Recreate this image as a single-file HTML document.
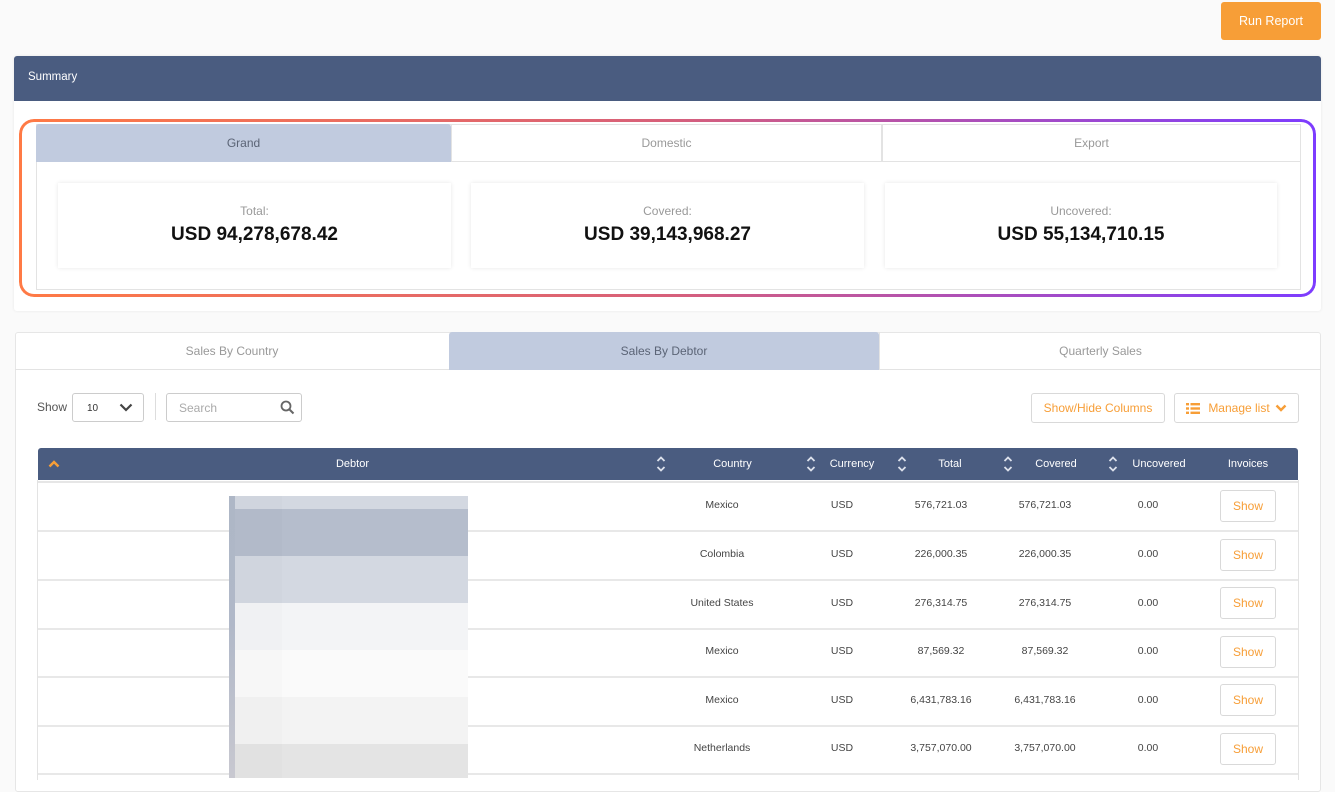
<!DOCTYPE html>
<html><head><meta charset="utf-8"><style>
*{box-sizing:border-box;margin:0;padding:0}
body{width:1335px;height:778px;overflow:hidden;background:#fafafa;font-family:"Liberation Sans",sans-serif;position:relative}
.a{position:absolute}
.c{display:flex;align-items:center;justify-content:center}
.btn{position:absolute;border:1px solid #d9d9d9;border-radius:3px;background:#fff;color:#f79e37;font-size:12px;display:flex;align-items:center;justify-content:center}
.th{position:absolute;top:448px;height:32px;color:#fff;font-size:11px;display:flex;align-items:center;justify-content:center}
.td{position:absolute;font-size:10.5px;color:#444;display:flex;align-items:center;justify-content:center;height:48px}
.sort{position:absolute;top:455px;width:10px;height:18px}
</style></head><body>
<div class="a c" style="left:1221px;top:2px;width:100px;height:38px;background:#f79e37;border-radius:3px;color:#fff;font-size:12.5px">Run Report</div>

<div class="a" style="left:14px;top:56px;width:1307px;height:255px;background:#fff;box-shadow:0 0 3px rgba(0,0,0,.08);border-radius:3px"></div>
<div class="a" style="left:14px;top:56px;width:1307px;height:45px;background:#4a5c80;border-radius:3px 3px 0 0;color:#fff;font-size:11.5px;padding:15px 0 0 14px">Summary</div>

<div class="a" style="left:36px;top:124px;width:1265px;height:166px;border:1px solid #e3e3e3;background:#fff"></div>
<div class="a c" style="left:36px;top:124px;width:415px;height:38px;background:#c1cbdf;color:#5b6476;font-size:12px;border-radius:3px 3px 0 0">Grand</div>
<div class="a c" style="left:451px;top:124px;width:431px;height:38px;border:1px solid #e3e3e3;color:#999;font-size:12px">Domestic</div>
<div class="a c" style="left:882px;top:124px;width:419px;height:38px;border:1px solid #e3e3e3;color:#999;font-size:12px">Export</div>

<div class="a" style="left:58px;top:183px;width:393px;height:85px;box-shadow:0 0 4px rgba(0,0,0,.1);text-align:center"><div style="margin-top:21px;font-size:12px;color:#999">Total:</div><div style="font-size:19px;font-weight:bold;color:#111;margin-top:6px">USD 94,278,678.42</div></div>
<div class="a" style="left:471px;top:183px;width:393px;height:85px;box-shadow:0 0 4px rgba(0,0,0,.1);text-align:center"><div style="margin-top:21px;font-size:12px;color:#999">Covered:</div><div style="font-size:19px;font-weight:bold;color:#111;margin-top:6px">USD 39,143,968.27</div></div>
<div class="a" style="left:885px;top:183px;width:392px;height:85px;box-shadow:0 0 4px rgba(0,0,0,.1);text-align:center"><div style="margin-top:21px;font-size:12px;color:#999">Uncovered:</div><div style="font-size:19px;font-weight:bold;color:#111;margin-top:6px">USD 55,134,710.15</div></div>

<div class="a" style="left:19px;top:119px;width:1297px;height:178px;border-radius:15px;padding:3px;background:linear-gradient(90deg,#ff7a45,#d7607a 50%,#7d3cff);-webkit-mask:linear-gradient(#000 0 0) content-box,linear-gradient(#000 0 0);-webkit-mask-composite:xor;mask-composite:exclude"></div>

<div class="a" style="left:15px;top:332px;width:1306px;height:460px;background:#fff;border:1px solid #e6e6e6;border-radius:3px"></div>
<div class="a c" style="left:15px;top:332px;width:434px;height:38px;border-bottom:1px solid #e3e3e3;color:#999;font-size:12px">Sales By Country</div>
<div class="a c" style="left:449px;top:332px;width:430px;height:38px;background:#c1cbdf;color:#5b6476;font-size:12px;border-radius:3px 3px 0 0">Sales By Debtor</div>
<div class="a c" style="left:879px;top:332px;width:442px;height:38px;border-bottom:1px solid #e3e3e3;border-left:1px solid #e3e3e3;color:#999;font-size:12px">Quarterly Sales</div>

<div class="a" style="left:37px;top:400px;font-size:12px;color:#555">Show</div>
<div class="a" style="left:72px;top:393px;width:72px;height:29px;border:1px solid #ccc;border-radius:3px;font-size:10px;color:#333;padding:9px 0 0 14px">10<svg style="position:absolute;left:46px;top:9px" width="14" height="9" viewBox="0 0 14 9"><path d="M1.5 1.5L7 7l5.5-5.5" stroke="#444" stroke-width="2.2" fill="none"/></svg></div>
<div class="a" style="left:155px;top:393px;width:1px;height:27px;background:#ddd"></div>
<div class="a" style="left:166px;top:393px;width:136px;height:29px;border:1px solid #ccc;border-radius:3px;font-size:12px;color:#aaa;padding:7px 0 0 12px">Search<svg style="position:absolute;left:113px;top:6px" width="15" height="15" viewBox="0 0 15 15"><circle cx="6" cy="6" r="4.5" stroke="#666" stroke-width="1.8" fill="none"/><path d="M9.5 9.5L13.5 13.5" stroke="#666" stroke-width="2"/></svg></div>

<div class="btn" style="left:1031px;top:393px;width:134px;height:30px">Show/Hide Columns</div>
<div class="btn" style="left:1174px;top:393px;width:125px;height:30px"><svg width="14" height="11" viewBox="0 0 14 11" style="margin-right:8px"><g fill="#f79e37"><rect x="0" y="0" width="3" height="2.4"/><rect x="4.5" y="0" width="9.5" height="2.4"/><rect x="0" y="4.3" width="3" height="2.4"/><rect x="4.5" y="4.3" width="9.5" height="2.4"/><rect x="0" y="8.6" width="3" height="2.4"/><rect x="4.5" y="8.6" width="9.5" height="2.4"/></g></svg>Manage list<svg width="12" height="8" viewBox="0 0 12 8" style="margin-left:5px"><path d="M1.5 1.5L6 6l4.5-4.5" stroke="#f79e37" stroke-width="2.4" fill="none"/></svg></div>

<div class="a" style="left:38px;top:448px;width:1260px;height:32px;background:#4a5c80;border-radius:3px 3px 0 0"></div>
<svg class="a" style="left:48px;top:460px" width="12" height="8" viewBox="0 0 12 8"><path d="M1.5 6.5L6 2l4.5 4.5" stroke="#f79e37" stroke-width="2.4" fill="none"/></svg>
<div class="th" style="left:300px;width:105px">Debtor</div>
<div class="th" style="left:690px;width:85px">Country</div>
<div class="th" style="left:822px;width:60px">Currency</div>
<div class="th" style="left:920px;width:60px">Total</div>
<div class="th" style="left:1025px;width:62px">Covered</div>
<div class="th" style="left:1125px;width:68px">Uncovered</div>
<div class="th" style="left:1215px;width:66px">Invoices</div>
<svg class="sort" style="left:656px" viewBox="0 0 10 18"><path d="M1.5 6L5 2.5 8.5 6M1.5 12L5 15.5 8.5 12" stroke="#dde2ec" stroke-width="1.8" fill="none"/></svg>
<svg class="sort" style="left:806px" viewBox="0 0 10 18"><path d="M1.5 6L5 2.5 8.5 6M1.5 12L5 15.5 8.5 12" stroke="#dde2ec" stroke-width="1.8" fill="none"/></svg>
<svg class="sort" style="left:897px" viewBox="0 0 10 18"><path d="M1.5 6L5 2.5 8.5 6M1.5 12L5 15.5 8.5 12" stroke="#dde2ec" stroke-width="1.8" fill="none"/></svg>
<svg class="sort" style="left:1003px" viewBox="0 0 10 18"><path d="M1.5 6L5 2.5 8.5 6M1.5 12L5 15.5 8.5 12" stroke="#dde2ec" stroke-width="1.8" fill="none"/></svg>
<svg class="sort" style="left:1108px" viewBox="0 0 10 18"><path d="M1.5 6L5 2.5 8.5 6M1.5 12L5 15.5 8.5 12" stroke="#dde2ec" stroke-width="1.8" fill="none"/></svg>

<div class="a" style="left:37px;top:480px;width:1262px;height:300px;background:#fff;border-left:1px solid #e3e3e3;border-right:1px solid #e3e3e3"></div>
<div class="a" style="left:38px;top:481px;width:1260px;height:2px;background:#e6e6e6"></div>

<div class="a" style="left:38px;top:530px;width:1260px;height:2px;background:#e8e8e8"></div>
<div class="a" style="left:38px;top:579px;width:1260px;height:2px;background:#e8e8e8"></div>
<div class="a" style="left:38px;top:628px;width:1260px;height:2px;background:#e8e8e8"></div>
<div class="a" style="left:38px;top:676px;width:1260px;height:2px;background:#e8e8e8"></div>
<div class="a" style="left:38px;top:725px;width:1260px;height:2px;background:#e8e8e8"></div>
<div class="a" style="left:38px;top:773px;width:1260px;height:2px;background:#e8e8e8"></div>

<div class="td" style="left:672px;top:481px;width:100px">Mexico</div><div class="td" style="left:812px;top:481px;width:60px">USD</div><div class="td" style="left:901px;top:481px;width:80px">576,721.03</div><div class="td" style="left:1005px;top:481px;width:80px">576,721.03</div><div class="td" style="left:1118px;top:481px;width:60px">0.00</div><div class="btn" style="left:1220px;top:490px;width:56px;height:32px">Show</div>
<div class="td" style="left:672px;top:530px;width:100px">Colombia</div><div class="td" style="left:812px;top:530px;width:60px">USD</div><div class="td" style="left:901px;top:530px;width:80px">226,000.35</div><div class="td" style="left:1005px;top:530px;width:80px">226,000.35</div><div class="td" style="left:1118px;top:530px;width:60px">0.00</div><div class="btn" style="left:1220px;top:539px;width:56px;height:32px">Show</div>
<div class="td" style="left:672px;top:579px;width:100px">United States</div><div class="td" style="left:812px;top:579px;width:60px">USD</div><div class="td" style="left:901px;top:579px;width:80px">276,314.75</div><div class="td" style="left:1005px;top:579px;width:80px">276,314.75</div><div class="td" style="left:1118px;top:579px;width:60px">0.00</div><div class="btn" style="left:1220px;top:587px;width:56px;height:32px">Show</div>
<div class="td" style="left:672px;top:627px;width:100px">Mexico</div><div class="td" style="left:812px;top:627px;width:60px">USD</div><div class="td" style="left:901px;top:627px;width:80px">87,569.32</div><div class="td" style="left:1005px;top:627px;width:80px">87,569.32</div><div class="td" style="left:1118px;top:627px;width:60px">0.00</div><div class="btn" style="left:1220px;top:636px;width:56px;height:32px">Show</div>
<div class="td" style="left:672px;top:676px;width:100px">Mexico</div><div class="td" style="left:812px;top:676px;width:60px">USD</div><div class="td" style="left:901px;top:676px;width:80px">6,431,783.16</div><div class="td" style="left:1005px;top:676px;width:80px">6,431,783.16</div><div class="td" style="left:1118px;top:676px;width:60px">0.00</div><div class="btn" style="left:1220px;top:684px;width:56px;height:32px">Show</div>
<div class="td" style="left:672px;top:724px;width:100px">Netherlands</div><div class="td" style="left:812px;top:724px;width:60px">USD</div><div class="td" style="left:901px;top:724px;width:80px">3,757,070.00</div><div class="td" style="left:1005px;top:724px;width:80px">3,757,070.00</div><div class="td" style="left:1118px;top:724px;width:60px">0.00</div><div class="btn" style="left:1220px;top:733px;width:56px;height:32px">Show</div>

<div class="a" style="left:229px;top:496px;width:239px;height:282px;background:linear-gradient(#d3d8e1 0 13px,#b5bdcc 13px 60px,#d3d8e1 60px 107px,#f3f4f6 107px 154px,#fafafa 154px 201px,#f3f3f3 201px 248px,#e4e4e4 248px)"></div>
<div class="a" style="left:235px;top:496px;width:47px;height:282px;background:rgba(0,0,0,.012)"></div>
<div class="a" style="left:229px;top:496px;width:6px;height:282px;background:linear-gradient(#aeb7c6,#b0b8c8 45%,#c8c8d0)"></div>
</body></html>
